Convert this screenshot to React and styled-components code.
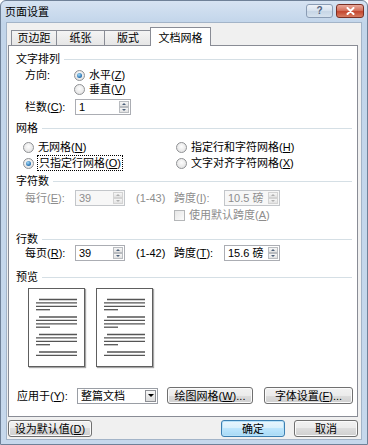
import React from "react";
import styled, { createGlobalStyle, css } from "styled-components";

const GlobalStyle = createGlobalStyle`
  html, body { margin: 0; padding: 0; background: #fff; }
  body {
    font-family: "Liberation Sans", "Noto Sans CJK SC", sans-serif;
    font-size: 11px;
    line-height: 14px;
    color: #000;
  }
  * { box-sizing: border-box; }
`;

const Window = styled.div`
  width: 368px;
  height: 445px;
  display: flex;
  flex-direction: column;
  background: linear-gradient(#d6e3f2, #c2d5ea 22px, #c6d8ec);
  border: 1px solid #6f8198;
  border-radius: 6px 6px 0 0;
  padding: 0 5px 4px 5px;
`;

const TitleBar = styled.div`
  height: 21px;
  display: flex;
  align-items: center;
  justify-content: space-between;
`;

const Title = styled.span`
  margin-left: -1px;
  color: #000;
`;

const Captions = styled.div`
  display: flex;
  gap: 3px;
  align-self: flex-start;
  margin-top: 3px;
  margin-right: -2px;
`;

const CaptionButton = styled.div`
  width: ${p => p.$w}px;
  height: 14px;
  border-radius: 3px;
  display: flex;
  align-items: center;
  justify-content: center;
  font-size: 10px;
  font-weight: bold;
  ${p =>
    p.$close
      ? css`
          border: 1px solid #7a2f24;
          background: linear-gradient(#e9a99b, #d5735f 45%, #c3462f 55%, #d77d62);
        `
      : css`
          border: 1px solid #8a9cb4;
          background: linear-gradient(#edf2f8, #d8e3ef 45%, #c7d6e6 55%, #d6e2ee);
          color: #51637d;
        `}
`;

const Client = styled.div`
  flex: 1;
  display: flex;
  flex-direction: column;
  background: #f0f0f0;
  border: 1px solid #a3b4c8;
  padding: 4px 3px 0 1px;
`;

const TabRow = styled.div`
  display: flex;
  align-items: flex-end;
  height: 18px;
  padding-left: 3px;
  position: relative;
  z-index: 1;
`;

const Tab = styled.div`
  width: ${p => p.$w}px;
  height: ${p => (p.$active ? 19 : 15)}px;
  margin-left: ${p => p.$ml || 0}px;
  margin-bottom: ${p => (p.$active ? -1 : 0)}px;
  border: 1px solid #898c95;
  border-bottom: none;
  display: flex;
  align-items: center;
  justify-content: center;
  padding-top: ${p => (p.$active ? 1 : 0)}px;
  background: ${p => (p.$active ? "#fff" : "linear-gradient(#f4f4f4, #e6e6e6)")};
  position: relative;
  z-index: ${p => (p.$active ? 2 : 1)};
`;

const Panel = styled.div`
  height: 372px;
  display: flex;
  flex-direction: column;
  background: #fff;
  border: 1px solid #898c95;
  padding: 7px 5px 12px 7px;
`;

const GroupHeader = styled.div`
  display: flex;
  align-items: center;
  gap: 4px;
  height: 12px;
  margin-top: ${p => p.$mt || 0}px;
  white-space: nowrap;
  &::after {
    content: "";
    flex: 1;
    height: 1px;
    background: #d5dfe5;
  }
`;

const Row = styled.div`
  display: flex;
  align-items: center;
  height: ${p => p.$h || 14}px;
  margin-top: ${p => p.$mt || 0}px;
  padding-left: ${p => p.$pl || 0}px;
  white-space: nowrap;
`;

const Label = styled.span`
  width: ${p => (p.$w ? `${p.$w}px` : "auto")};
  flex: none;
  margin-left: ${p => p.$ml || 0}px;
  color: ${p => (p.$dim ? "#8d8d8d" : "#000")};
`;

const U = styled.span`
  text-decoration: underline;
`;

const RadioItem = styled.label`
  display: flex;
  align-items: center;
  gap: 4px;
  width: ${p => (p.$w ? `${p.$w}px` : "auto")};
  flex: none;
`;

const RadioDot = styled.span`
  width: 11px;
  height: 11px;
  flex: none;
  border-radius: 50%;
  border: 1px solid #8f9194;
  background: radial-gradient(circle at 50% 40%, #fdfdfd, #dcdcdc);
  position: relative;
  ${p =>
    p.$on &&
    css`
      &::after {
        content: "";
        position: absolute;
        inset: 2px;
        border-radius: 50%;
        background: radial-gradient(circle at 40% 35%, #a6dcf8, #2a74b4 65%, #1a4f86);
      }
    `}
`;

const Focus = styled.span`
  outline: 1px dotted #000;
  outline-offset: 0;
  padding: 0 1px;
`;

const CheckBox = styled.span`
  width: 11px;
  height: 11px;
  flex: none;
  border: 1px solid #b4b6b8;
  background: linear-gradient(135deg, #e6e6e6, #fbfbfb);
  margin-right: 4px;
`;

const SpinBox = styled.div`
  width: ${p => p.$w}px;
  height: 16px;
  flex: none;
  display: flex;
  border: 1px solid ${p => (p.$dim ? "#c3c6ca" : "#abadb3")};
  background: ${p => (p.$dim ? "#f7f7f7" : "#fff")};
`;

const SpinText = styled.span`
  flex: 1;
  padding-left: 3px;
  line-height: 14px;
  color: ${p => (p.$dim ? "#8d8d8d" : "#000")};
`;

const SpinButtons = styled.div`
  width: 11px;
  display: flex;
  flex-direction: column;
  padding: 1px 1px 1px 0;
  gap: 0;
`;

const SpinBtn = styled.span`
  flex: 1;
  display: flex;
  align-items: center;
  justify-content: center;
  border: 1px solid ${p => (p.$dim ? "#d3d3d3" : "#b9bcc0")};
  background: linear-gradient(#f6f6f6, #e2e2e2);
  &::before {
    content: "";
    border-left: 2px solid transparent;
    border-right: 2px solid transparent;
    ${p =>
      p.$down
        ? css`border-top: 2px solid ${p.$dim ? "#b0b0b0" : "#4c607a"};`
        : css`border-bottom: 2px solid ${p.$dim ? "#b0b0b0" : "#4c607a"};`}
  }
`;

const Spin = ({ w, value, dim }) => (
  <SpinBox $w={w} $dim={dim}>
    <SpinText $dim={dim}>{value}</SpinText>
    <SpinButtons>
      <SpinBtn $dim={dim} />
      <SpinBtn $dim={dim} $down />
    </SpinButtons>
  </SpinBox>
);

const PreviewRow = styled.div`
  display: flex;
  gap: 11px;
  margin-top: 5px;
  padding-left: 12px;
`;

const Page = styled.div`
  width: 57px;
  height: 79px;
  border: 1px solid #5e5e5e;
  background: #fff;
  box-shadow: 1px 1px 1px rgba(0, 0, 0, 0.35);
`;

const Select = styled.div`
  width: 81px;
  height: 16px;
  flex: none;
  display: flex;
  border: 1px solid #9a9ea5;
  background: #fff;
  padding: 1px;
`;

const SelectText = styled.span`
  flex: 1;
  padding-left: 2px;
  line-height: 12px;
`;

const SelectArrow = styled.span`
  width: 11px;
  display: flex;
  align-items: center;
  justify-content: center;
  border: 1px solid #8d8f94;
  background: linear-gradient(#f7f7f7, #dcdcdc);
  &::before {
    content: "";
    border-left: 3px solid transparent;
    border-right: 3px solid transparent;
    border-top: 3px solid #000;
  }
`;

const Button = styled.div`
  width: ${p => p.$w}px;
  height: 17px;
  flex: none;
  margin-left: ${p => p.$ml || 0}px;
  display: flex;
  align-items: center;
  justify-content: center;
  border-radius: 3px;
  white-space: nowrap;
  border: 1px solid ${p => (p.$default ? "#3c7fb1" : "#707070")};
  box-shadow: inset 0 0 0 1px ${p => (p.$default ? "#b8e2f9" : "#fbfbfb")};
  background: ${p =>
    p.$default
      ? "linear-gradient(#eaf6fd, #d9f0fc 50%, #bee6fd 50%, #a7d9f5)"
      : "linear-gradient(#f2f2f2, #ebebeb 50%, #dddddd 50%, #cfcfcf)"};
`;

const Bottom = styled.div`
  display: flex;
  align-items: center;
  margin-top: 3px;
`;

const Spacer = styled.div`
  flex: 1;
`;

const ApplyRow = styled(Row)`
  margin-top: auto;
  padding-left: 1px;
`;

const groups = [
  [0, 3.4, 6.8, 10.2],
  [17.5, 20.9, 24.3, 27.7],
  [35, 38.4, 41.8, 45.2],
  [52.5, 55.9],
];

const PageLines = () => (
  <svg width="55" height="77" viewBox="0 0 55 77">
    {groups.map((g, gi) =>
      g.map((y, li) => {
        const yy = 10.5 + y;
        let x1 = 7;
        let x2 = 48;
        if (li === 0) x1 = 10;
        if (li === 3) x2 = 21;
        return (
          <line key={`${gi}-${li}`} x1={x1} x2={x2} y1={yy} y2={yy} stroke="#555" strokeWidth="1.3" />
        );
      })
    )}
  </svg>
);

export default function App() {
  return (
    <>
      <GlobalStyle />
      <Window>
        <TitleBar>
          <Title>页面设置</Title>
          <Captions>
            <CaptionButton $w={27}>?</CaptionButton>
            <CaptionButton $w={28} $close>
              <svg width="9" height="8" viewBox="0 0 9 8">
                <path d="M1.5 1 L7.5 7 M7.5 1 L1.5 7" stroke="#fff" strokeWidth="2" strokeLinecap="round" />
              </svg>
            </CaptionButton>
          </Captions>
        </TitleBar>
        <Client>
          <TabRow>
            <Tab $w={46}>页边距</Tab>
            <Tab $w={49} $ml={-1}>纸张</Tab>
            <Tab $w={48} $ml={-1}>版式</Tab>
            <Tab $w={61} $ml={-2} $active>文档网格</Tab>
          </TabRow>
          <Panel>
            <GroupHeader>文字排列</GroupHeader>
            <Row $mt={3} $pl={9}>
              <Label $w={49}>方向:</Label>
              <RadioItem>
                <RadioDot $on />
                <span>水平(<U>Z</U>)</span>
              </RadioItem>
            </Row>
            <Row $pl={58}>
              <RadioItem>
                <RadioDot />
                <span>垂直(<U>V</U>)</span>
              </RadioItem>
            </Row>
            <Row $h={16} $mt={3} $pl={9}>
              <Label $w={50}>栏数(<U>C</U>):</Label>
              <Spin w={56} value="1" />
            </Row>

            <GroupHeader $mt={7}>网格</GroupHeader>
            <Row $mt={6} $pl={7}>
              <RadioItem $w={153}>
                <RadioDot />
                <span>无网格(<U>N</U>)</span>
              </RadioItem>
              <RadioItem>
                <RadioDot />
                <span>指定行和字符网格(<U>H</U>)</span>
              </RadioItem>
            </Row>
            <Row $mt={2} $pl={7}>
              <RadioItem $w={153}>
                <RadioDot $on />
                <Focus>只指定行网格(<U>O</U>)</Focus>
              </RadioItem>
              <RadioItem>
                <RadioDot />
                <span>文字对齐字符网格(<U>X</U>)</span>
              </RadioItem>
            </Row>

            <GroupHeader $mt={5}>字符数</GroupHeader>
            <Row $h={16} $mt={3} $pl={9}>
              <Label $w={50} $dim>每行(<U>E</U>):</Label>
              <Spin w={50} value="39" dim />
              <Label $w={38} $ml={11} $dim>(1-43)</Label>
              <Label $w={50} $dim>跨度(<U>I</U>):</Label>
              <Spin w={56} value="10.5 磅" dim />
            </Row>
            <Row $mt={2} $pl={158}>
              <CheckBox />
              <Label $dim>使用默认跨度(<U>A</U>)</Label>
            </Row>

            <GroupHeader $mt={11}>行数</GroupHeader>
            <Row $h={16} $pl={9}>
              <Label $w={50}>每页(<U>R</U>):</Label>
              <Spin w={50} value="39" />
              <Label $w={38} $ml={11}>(1-42)</Label>
              <Label $w={50}>跨度(<U>T</U>):</Label>
              <Spin w={56} value="15.6 磅" />
            </Row>

            <GroupHeader $mt={10}>预览</GroupHeader>
            <PreviewRow>
              <Page>
                <PageLines />
              </Page>
              <Page>
                <PageLines />
              </Page>
            </PreviewRow>

            <ApplyRow $h={17}>
              <Label $w={60}>应用于(<U>Y</U>):</Label>
              <Select>
                <SelectText>整篇文档</SelectText>
                <SelectArrow />
              </Select>
              <Button $w={86} $ml={9}>绘图网格(<U>W</U>)...</Button>
              <Button $w={89} $ml={11}>字体设置(<U>F</U>)...</Button>
            </ApplyRow>
          </Panel>
          <Bottom>
            <Button $w={84}>设为默认值(<U>D</U>)</Button>
            <Spacer />
            <Button $w={64} $default>确定</Button>
            <Button $w={64} $ml={9}>取消</Button>
          </Bottom>
        </Client>
      </Window>
    </>
  );
}
